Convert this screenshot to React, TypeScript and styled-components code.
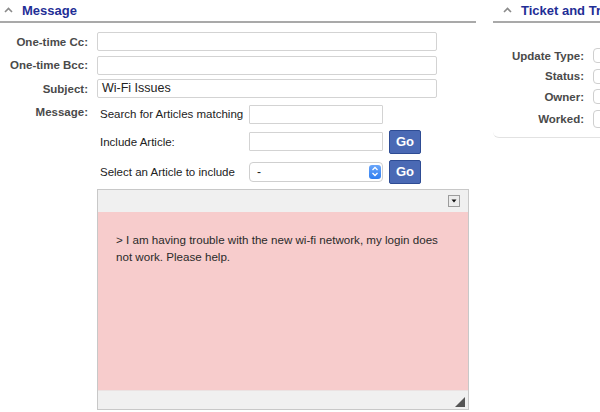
import React from "react";
import styled, { createGlobalStyle } from "styled-components";

const Global = createGlobalStyle`
  html, body { margin: 0; padding: 0; background: #fff; overflow: hidden; }
  body {
    font-family: "Liberation Sans", Arial, Helvetica, sans-serif;
    width: 600px;
    height: 412px;
  }
  * { box-sizing: border-box; }
`;

const Page = styled.div`
  display: flex;
  gap: 17px;
  width: 600px;
  height: 412px;
  overflow: hidden;
`;

const LeftCol = styled.section`
  width: 476px;
  flex: none;
`;

const RightCol = styled.section`
  width: 220px;
  flex: none;
`;

const SectionHeader = styled.div<{ $pad: number }>`
  display: flex;
  align-items: center;
  gap: 9px;
  height: 23px;
  padding: 0 0 1px ${(p) => p.$pad}px;
  border-bottom: 2px solid #a9a9a9;
`;

const Title = styled.h2`
  margin: 0;
  font-size: 13px;
  font-weight: bold;
  color: #1f2e96;
  white-space: nowrap;
`;

const Chevron = () => (
  <svg width="9" height="6" viewBox="0 0 9 6">
    <polyline points="1,5 4.5,1.5 8,5" fill="none" stroke="#8a8a8a" strokeWidth="1.6" />
  </svg>
);

const FormGrid = styled.div`
  display: grid;
  grid-template-columns: 88px 340px;
  column-gap: 9px;
  row-gap: 4.5px;
  padding-top: 9px;
`;

const Label = styled.label<{ $top?: boolean }>`
  font-size: 11.5px;
  font-weight: bold;
  color: #4a4a4a;
  text-align: right;
  white-space: nowrap;
  align-self: ${(p) => (p.$top ? "start" : "center")};
  padding-top: ${(p) => (p.$top ? "3px" : "0")};
`;

const TextInput = styled.div`
  height: 19px;
  border: 1px solid #d3d3d3;
  border-radius: 2px;
  background: #fff;
  font-size: 12.5px;
  color: #222;
  padding: 0 4px;
  line-height: 17px;
  white-space: nowrap;
`;

const MessageBlock = styled.div`
  padding-top: 2px;
  grid-column: 2;
  min-width: 0;
`;

const ArticleGrid = styled.div`
  display: grid;
  grid-template-columns: 149px 134px 32px;
  column-gap: 3px;
  grid-template-rows: 19px 24px 24px;
  row-gap: 6px;
  align-items: center;
`;

const SubLabel = styled.span`
  padding-left: 3px;
  font-size: 11.5px;
  color: #222;
  white-space: nowrap;
`;

const SmallInput = styled.div`
  height: 19px;
  border: 1px solid #d3d3d3;
  border-radius: 1px;
  background: #fff;
`;

const Select = styled.div`
  position: relative;
  height: 20px;
  border: 1px solid #cfcfcf;
  border-radius: 4px;
  background: #fff;
  font-size: 12px;
  color: #222;
  padding-left: 7px;
  line-height: 18px;
`;

const SelectArrows = styled.span`
  position: absolute;
  right: 1px;
  top: 2px;
  width: 12px;
  height: 14px;
  border-radius: 3px;
  background: linear-gradient(#6aa6fa, #2f7ef0);
  display: flex;
  align-items: center;
  justify-content: center;
`;

const GoButton = styled.button`
  width: 32px;
  height: 24px;
  margin-left: 3px;
  padding: 0;
  border: 1px solid #2e4c94;
  border-radius: 2px;
  background: #4a69b4;
  color: #fff;
  font-family: inherit;
  font-weight: bold;
  font-size: 13px;
`;

const Editor = styled.div`
  margin-top: 5px;
  width: 372px;
  border: 1px solid #c8c8c8;
  display: flex;
  flex-direction: column;
`;

const Toolbar = styled.div`
  height: 22px;
  background: #f0f0f0;
  display: flex;
  justify-content: flex-end;
  align-items: center;
  padding-right: 8px;
`;

const MenuButton = styled.span`
  width: 12px;
  height: 12px;
  border: 1px solid #9c9c9c;
  background: #ececec;
  display: flex;
  align-items: center;
  justify-content: center;
`;

const Body = styled.div`
  height: 178px;
  background: #f7cccc;
  padding: 19px 18px 0 18px;
  font-size: 11.6px;
  line-height: 17px;
  color: #2a2a2a;
`;

const Footer = styled.div`
  height: 19px;
  background: #f0f0f0;
  border-top: 1px solid #ebe2e2;
  display: flex;
  justify-content: flex-end;
  align-items: flex-end;
  padding: 0 3px 2px 0;
`;

const SideForm = styled.div`
  display: grid;
  grid-template-columns: 91px 40px;
  column-gap: 9px;
  grid-template-rows: 15px 15px 15px 18px;
  row-gap: 5.5px;
  padding: 25px 0 9px;
  border-bottom: 1px solid #e2e2e2;
  border-bottom-left-radius: 6px;
  align-items: center;
`;

const SideBox = styled.div<{ $h: number }>`
  height: ${(p) => p.$h}px;
  border: 1px solid #cfcfcf;
  border-radius: 4px;
  background: #fff;
`;

export default function App() {
  return (
    <>
      <Global />
      <Page>
        <LeftCol>
          <SectionHeader $pad={4}>
            <Chevron />
            <Title>Message</Title>
          </SectionHeader>
          <FormGrid>
            <Label>One-time Cc:</Label>
            <TextInput />
            <Label>One-time Bcc:</Label>
            <TextInput />
            <Label>Subject:</Label>
            <TextInput>Wi-Fi Issues</TextInput>
            <Label $top>Message:</Label>
            <MessageBlock>
              <ArticleGrid>
                <SubLabel>Search for Articles matching</SubLabel>
                <SmallInput />
                <span />
                <SubLabel>Include Article:</SubLabel>
                <SmallInput />
                <GoButton>Go</GoButton>
                <SubLabel>Select an Article to include</SubLabel>
                <Select>
                  -
                  <SelectArrows>
                    <svg width="8" height="11" viewBox="0 0 8 11">
                      <polyline points="1.5,4 4,1.5 6.5,4" fill="none" stroke="#fff" strokeWidth="1.3" />
                      <polyline points="1.5,7 4,9.5 6.5,7" fill="none" stroke="#fff" strokeWidth="1.3" />
                    </svg>
                  </SelectArrows>
                </Select>
                <GoButton>Go</GoButton>
              </ArticleGrid>
              <Editor>
                <Toolbar>
                  <MenuButton>
                    <svg width="6" height="4" viewBox="0 0 6 4">
                      <polygon points="0.5,0.5 5.5,0.5 3,3.5" fill="#111" />
                    </svg>
                  </MenuButton>
                </Toolbar>
                <Body>
                  &gt; I am having trouble with the new wi-fi network, my login does
                  <br />
                  not work. Please help.
                </Body>
                <Footer>
                  <svg width="10" height="10" viewBox="0 0 10 10">
                    <polygon points="10,0 10,10 0,10" fill="#555" />
                  </svg>
                </Footer>
              </Editor>
            </MessageBlock>
          </FormGrid>
        </LeftCol>
        <RightCol>
          <SectionHeader $pad={10}>
            <Chevron />
            <Title>Ticket and Transactions</Title>
          </SectionHeader>
          <SideForm>
            <Label>Update Type:</Label>
            <SideBox $h={15} />
            <Label>Status:</Label>
            <SideBox $h={15} />
            <Label>Owner:</Label>
            <SideBox $h={15} />
            <Label>Worked:</Label>
            <SideBox $h={18} />
          </SideForm>
        </RightCol>
      </Page>
    </>
  );
}
